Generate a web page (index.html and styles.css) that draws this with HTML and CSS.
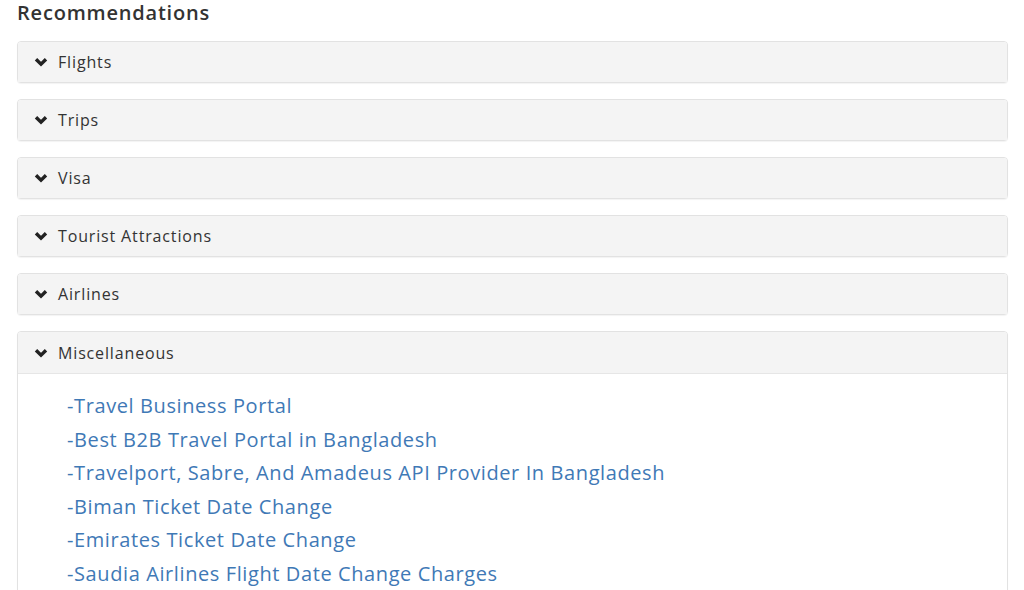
FILE: index.html
```html
<!DOCTYPE html>
<html lang="en">

<head>
    <meta charset="UTF-8">
    <meta name="viewport" content="width=device-width, initial-scale=1.0">
    <title>Recommendations</title>
    <link rel="stylesheet" href="styles.css">
</head>

<body>
    <div class="container">
        <h3 class="section-title">Recommendations</h3>

        <div class="panel-group">
            <div class="panel">
                <div class="panel-heading">
                    <svg class="chevron" viewBox="0 0 14 10"><polyline points="2,2.2 7,7.2 12,2.2" /></svg>
                    <span class="panel-title">Flights</span>
                </div>
            </div>
            <div class="panel">
                <div class="panel-heading">
                    <svg class="chevron" viewBox="0 0 14 10"><polyline points="2,2.2 7,7.2 12,2.2" /></svg>
                    <span class="panel-title">Trips</span>
                </div>
            </div>
            <div class="panel">
                <div class="panel-heading">
                    <svg class="chevron" viewBox="0 0 14 10"><polyline points="2,2.2 7,7.2 12,2.2" /></svg>
                    <span class="panel-title">Visa</span>
                </div>
            </div>
            <div class="panel">
                <div class="panel-heading">
                    <svg class="chevron" viewBox="0 0 14 10"><polyline points="2,2.2 7,7.2 12,2.2" /></svg>
                    <span class="panel-title">Tourist Attractions</span>
                </div>
            </div>
            <div class="panel">
                <div class="panel-heading">
                    <svg class="chevron" viewBox="0 0 14 10"><polyline points="2,2.2 7,7.2 12,2.2" /></svg>
                    <span class="panel-title">Airlines</span>
                </div>
            </div>
            <div class="panel open">
                <div class="panel-heading">
                    <svg class="chevron" viewBox="0 0 14 10"><polyline points="2,2.2 7,7.2 12,2.2" /></svg>
                    <span class="panel-title">Miscellaneous</span>
                </div>
                <div class="panel-body">
                    <ul class="link-list">
                        <li><a href="#">-Travel Business Portal</a></li>
                        <li><a href="#">-Best B2B Travel Portal in Bangladesh</a></li>
                        <li><a href="#">-Travelport, Sabre, And Amadeus API Provider In Bangladesh</a></li>
                        <li><a href="#">-Biman Ticket Date Change</a></li>
                        <li><a href="#">-Emirates Ticket Date Change</a></li>
                        <li><a href="#">-Saudia Airlines Flight Date Change Charges</a></li>
                    </ul>
                </div>
            </div>
        </div>
    </div>
</body>

</html>
```

FILE: styles.css
```css
* {
    margin: 0;
    padding: 0;
    box-sizing: border-box;
}

body {
    font-family: "Open Sans", "Noto Sans", sans-serif;
    background-color: #fff;
    color: #333;
    overflow: hidden;
}

.container {
    padding: 0 16px 0 17px;
}

.section-title {
    font-size: 20px;
    font-weight: 600;
    line-height: 26px;
    color: #333;
    letter-spacing: 0.8px;
    margin-bottom: 15px;
}

.panel {
    border: 1px solid #e2e2e2;
    border-radius: 4px;
    margin-bottom: 16px;
    background-color: #fff;
    box-shadow: 0 1px 1px rgba(0, 0, 0, 0.05);
}

.panel-heading {
    display: flex;
    align-items: center;
    height: 40px;
    padding: 0 16px;
    background-color: #f4f4f4;
    border-radius: 3px 3px 0 0;
}

.open .panel-heading {
    height: 42px;
    border-bottom: 1px solid #e6e6e6;
}

.chevron {
    width: 14px;
    height: 10px;
    margin-right: 10px;
    fill: none;
    stroke: #222;
    stroke-width: 3.4;
    stroke-linecap: butt;
    stroke-linejoin: miter;
}

.panel-title {
    font-size: 16px;
    color: #333;
    letter-spacing: 0.85px;
}

.panel-body {
    padding: 15px 49px 10px;
}

.link-list {
    list-style: none;
}

.link-list li {
    font-size: 20px;
    line-height: 33.6px;
}

.link-list a {
    color: #3f79b6;
    text-decoration: none;
    letter-spacing: 0.6px;
}
```
